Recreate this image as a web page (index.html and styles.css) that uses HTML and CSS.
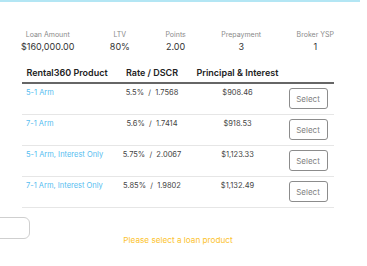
FILE: index.html
```html
<!DOCTYPE html>
<html lang="en">
<head>
    <meta charset="UTF-8">
    <meta name="viewport" content="width=device-width, initial-scale=1.0">
    <title>Rental360 Pricing</title>
    <link rel="stylesheet" href="styles.css">
</head>
<body>
    <div class="top-bar"></div>
    <div id="pricing">
        <div class="summary">
            <div class="summary-item">
                <span class="summary-label">Loan Amount</span>
                <span class="summary-value">$160,000.00</span>
            </div>
            <div class="summary-item">
                <span class="summary-label">LTV</span>
                <span class="summary-value">80%</span>
            </div>
            <div class="summary-item">
                <span class="summary-label">Points</span>
                <span class="summary-value">2.00</span>
            </div>
            <div class="summary-item">
                <span class="summary-label">Prepayment</span>
                <span class="summary-value">3</span>
            </div>
            <div class="summary-item">
                <span class="summary-label">Broker YSP</span>
                <span class="summary-value">1</span>
            </div>
        </div>

        <div class="products">
            <div class="row head">
                <div class="cell">Rental360 Product</div>
                <div class="cell">Rate / DSCR</div>
                <div class="cell">Principal &amp; Interest</div>
                <div class="cell"></div>
            </div>
            <div class="row">
                <div class="cell product"><a href="#">5-1 Arm</a></div>
                <div class="cell rate">5.5% &nbsp;/ &nbsp;1.7568</div>
                <div class="cell payment">$908.46</div>
                <div class="cell action"><button type="button">Select</button></div>
            </div>
            <div class="row">
                <div class="cell product"><a href="#">7-1 Arm</a></div>
                <div class="cell rate">5.6% &nbsp;/ &nbsp;1.7414</div>
                <div class="cell payment">$918.53</div>
                <div class="cell action"><button type="button">Select</button></div>
            </div>
            <div class="row">
                <div class="cell product"><a href="#">5-1 Arm, Interest Only</a></div>
                <div class="cell rate">5.75% &nbsp;/ &nbsp;2.0067</div>
                <div class="cell payment">$1,123.33</div>
                <div class="cell action"><button type="button">Select</button></div>
            </div>
            <div class="row">
                <div class="cell product"><a href="#">7-1 Arm, Interest Only</a></div>
                <div class="cell rate">5.85% &nbsp;/ &nbsp;1.9802</div>
                <div class="cell payment">$1,132.49</div>
                <div class="cell action"><button type="button">Select</button></div>
            </div>
        </div>

        <div class="footer">
            <div class="back-btn"></div>
            <p class="notice">Please select a loan product</p>
        </div>
    </div>
</body>
</html>
```

FILE: styles.css
```css
body {
    font-family: Inter, "Noto Sans", sans-serif;
    background-color: #fff;
    margin: 0;
    padding: 0;
    color: #333;
}
.top-bar {
    width: 360px;
    height: 2px;
    background-color: #b3e6f4;
}
#pricing {
    width: 312px;
    margin-left: 22px;
}
.summary {
    display: flex;
    justify-content: space-between;
    margin-top: 28px;
    margin-left: -1px;
}
.summary-item {
    display: flex;
    flex-direction: column;
    align-items: center;
}
.summary-label {
    font-size: 7px;
    color: #8a8a8a;
    line-height: 10px;
}
.summary-value {
    font-size: 9px;
    color: #333;
    line-height: 13px;
}
.products {
    margin-top: 12px;
}
.row {
    display: grid;
    grid-template-columns: 90px 80px 91px 51px;
    border-bottom: 1px solid #e6e6e6;
    height: 30px;
}
.row.head {
    height: 17px;
    border-bottom: 2px solid #666;
    font-weight: 600;
    font-size: 9px;
    color: #222;
}
.head .cell {
    text-align: center;
    line-height: 16px;
    padding-top: 0;
    font-size: 9px;
}
.cell {
    font-size: 7.5px;
    line-height: 10px;
    padding-top: 4px;
}
.product {
    padding-left: 4px;
}
.product a {
    color: #55bdf0;
    text-decoration: none;
}
.rate, .payment {
    text-align: center;
    color: #444;
}
.action {
    padding-top: 4px;
    text-align: center;
}
button {
    width: 39px;
    height: 21px;
    padding: 0;
    font-family: inherit;
    font-size: 8px;
    color: #808080;
    background-color: #fff;
    border: 1px solid #8c8c8c;
    border-radius: 3px;
    cursor: pointer;
    margin-left: -1px;
}
.footer {
    position: relative;
    height: 56px;
}
.back-btn {
    position: absolute;
    left: -42px;
    top: 9px;
    width: 48px;
    height: 20px;
    border: 1px solid #cfcfcf;
    border-radius: 6px;
}
.notice {
    margin: 0;
    padding-top: 27px;
    text-align: center;
    font-size: 8.2px;
    color: #fcc32e;
}
```
